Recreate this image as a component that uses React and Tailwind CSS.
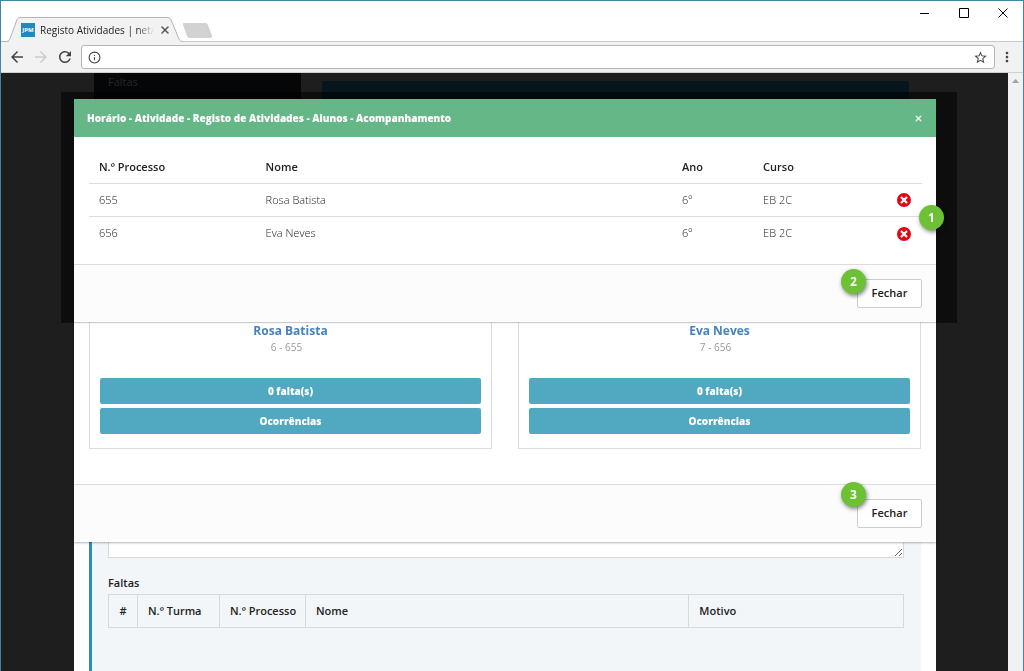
import { Info, X } from 'lucide-react';
import { MdArrowBack, MdArrowForward, MdMoreVert, MdRefresh, MdStarBorder } from 'react-icons/md';

const students = [
  { id: '655', number: '6', name: 'Rosa Batista', year: '6º', course: 'EB 2C' },
  { id: '656', number: '7', name: 'Eva Neves', year: '6º', course: 'EB 2C' },
];

function TabStrip() {
  return (
    <div className="flex h-10 items-end justify-between bg-white">
      <div className="flex items-end">
        <div className="relative h-6 w-[182px] pl-px">
          <svg className="absolute top-0 left-0 z-10 h-[26px] w-[182px]" viewBox="0 0 184 26" preserveAspectRatio="none" aria-hidden="true">
            <path d="M8 26V24C8.500 23.500 8.700 23 9 22L16 3C17 1 18 .5 20 .5H168C170 .5 171 1 172 3L180 22C181 24 182 25 184 25V26Z" fill="#f2f2f2" />
            <path d="M0 24.5H4C7 24.5 8 24 9 22L16 3C17 1 18 .5 20 .5H168C170 .5 171 1 172 3L180 22C181 24 182 24.5 184 24.5" fill="none" stroke="#b3b3b3" />
          </svg>
          <div className="relative z-20 flex h-[26px] items-center pl-[19px]">
            <span className="flex size-[14px] shrink-0 items-center justify-center bg-[#2089c0] text-[6px] font-bold text-white">
              JPM
            </span>
            <span className="ml-[5px] w-[114px] mask-r-from-85% text-[10px] whitespace-nowrap text-[#222]">
              Registo Atividades | netA
            </span>
            <button type="button" aria-label="Fechar separador" className="ml-[5px] text-[#555]">
              <X size={12} strokeWidth={3} />
            </button>
          </div>
        </div>
        <button type="button" aria-label="Novo separador" className="mb-[3px]">
          <svg className="h-[15px] w-[30px]" viewBox="0 0 30 15" aria-hidden="true">
            <path d="M1 .5H22C23.500 .5 24 1 24.500 2L28.500 12.500C29 14 28.500 14.500 27 14.500H7C5.500 14.500 5 14 4.500 13L.5 2C0 1 0 .5 1 .5Z" fill="#d2d2d2" stroke="#c4c4c4" strokeWidth=".6" />
          </svg>
        </button>
      </div>
      <div className="flex h-full items-start gap-[29px] pt-[7px] pr-[15px] text-black">
        <button type="button" aria-label="Minimizar">
          <svg className="size-[10px]" viewBox="0 0 10 10" stroke="currentColor"><path d="M0 5.500H9" /></svg>
        </button>
        <button type="button" aria-label="Maximizar">
          <svg className="size-[10px]" viewBox="0 0 10 10" stroke="currentColor" fill="none"><path d="M.5 .5H9.500V9.500H.5Z" /></svg>
        </button>
        <button type="button" aria-label="Fechar janela">
          <svg className="size-[10px]" viewBox="0 0 10 10" stroke="currentColor"><path d="M.5 .5L9.500 9.500M9.500 .5L.5 9.500" /></svg>
        </button>
      </div>
    </div>
  );
}

function Toolbar() {
  return (
    <div className="flex h-8 items-center border-t border-b border-t-[#c9c9c9] border-b-[#d0d0d0] bg-[#f2f2f2] pr-2 pl-[7px] text-[#444]">
      <button type="button" aria-label="Retroceder" className="mr-[6px]">
        <MdArrowBack size={18} />
      </button>
      <button type="button" aria-label="Avançar" className="mr-[6px] text-[#ccc]">
        <MdArrowForward size={18} />
      </button>
      <button type="button" aria-label="Recarregar" className="mr-[7px]">
        <MdRefresh size={18} />
      </button>
      <div className="flex h-6 flex-1 items-center rounded-[3px] border border-[#b5b5b5] bg-white px-[6px]">
        <Info size={13} strokeWidth={2} />
        <input type="text" aria-label="Endereço" className="h-5 flex-1 px-2 text-xs outline-none" />
        <button type="button" aria-label="Adicionar aos favoritos">
          <MdStarBorder size={15} />
        </button>
      </div>
      <button type="button" aria-label="Menu" className="ml-1">
        <MdMoreVert size={16} />
      </button>
    </div>
  );
}

function Marker({ value, className }) {
  return (
    <span
      className={`absolute z-20 flex size-[25px] items-center justify-center rounded-full bg-[#6cc234] text-xs font-bold text-white shadow-[1px_2px_4px_rgba(0,0,0,0.5)] ${className}`}
    >
      {value}
    </span>
  );
}

function ModalFooter({ marker, markerClass }) {
  return (
    <footer className="flex justify-end border-t border-[#dcdcdc] bg-[#fcfcfc] px-[14px] py-[14px]">
      <div className="relative">
        <button type="button" className="h-[29px] w-[65px] rounded-xs border border-[#ccc] bg-white text-[11px] font-semibold text-[#222]">
          Fechar
        </button>
        <Marker value={marker} className={markerClass} />
      </div>
    </footer>
  );
}

function RemoveIcon() {
  return (
    <svg className="size-[14px]" viewBox="0 0 14 14" aria-hidden="true">
      <circle cx="7" cy="7" r="7" fill="#e30613" />
      <path d="M4 4L10 10M10 4L4 10" stroke="white" strokeWidth="2.200" />
    </svg>
  );
}

function FollowUpModal() {
  return (
    <section role="dialog" aria-labelledby="follow-up-title" className="relative">
      <div className="absolute -top-[7px] -right-[21px] -bottom-px -left-[13px] bg-black/55" />
      <div className="relative z-10 bg-white shadow-[0_1px_1px_rgba(0,0,0,0.2)]">
        <header className="flex h-[38px] items-center justify-between bg-[#66b788] px-[13px] text-white">
          <h2 id="follow-up-title" className="text-[10px] font-extrabold">
            Horário - Atividade - Registo de Atividades - Alunos - Acompanhamento
          </h2>
          <button type="button" aria-label="Fechar" className="text-white/80">
            <X size={9} strokeWidth={4} />
          </button>
        </header>
        <div className="py-[14px] pr-[14px] pl-[15px]">
          <table className="w-full table-fixed border-separate border-spacing-0 text-left text-[11px]">
            <thead className="text-[#222]">
              <tr className="h-[33px]">
                <th className="w-[20%] border-b border-[#ddd] px-[10px] font-semibold">N.º Processo</th>
                <th className="w-[50%] border-b border-[#ddd] px-[10px] font-semibold">Nome</th>
                <th className="w-[81px] border-b border-[#ddd] px-[10px] font-semibold">Ano</th>
                <th className="border-b border-[#ddd] px-[10px] font-semibold">Curso</th>
                <th className="w-[35px] border-b border-[#ddd]" aria-label="Remover" />
              </tr>
            </thead>
            <tbody className="font-light text-[#222] [&>tr:not(:last-child)>td]:border-b">
              {students.map((student) => (
                <tr key={student.id} className="h-[33px]">
                  <td className="border-[#ddd] px-[10px]">{student.id}</td>
                  <td className="border-[#ddd] px-[10px]">{student.name}</td>
                  <td className="border-[#ddd] px-[10px]">{student.year}</td>
                  <td className="border-[#ddd] px-[10px]">{student.course}</td>
                  <td className="border-[#ddd] px-[10px]">
                    <button type="button" aria-label={`Remover ${student.name}`} className="block">
                      <RemoveIcon />
                    </button>
                  </td>
                </tr>
              ))}
            </tbody>
          </table>
        </div>
        <ModalFooter marker="2" markerClass="-top-[10px] -left-4" />
        <Marker value="1" className="top-[106px] -right-2" />
      </div>
    </section>
  );
}

function StudentCard({ student }) {
  return (
    <article className="flex-1 border border-t-0 border-[#ddd] px-[10px] pb-[14px] text-center">
      <h3 className="pt-px text-[12px] leading-4 font-bold text-[#4682bd]">{student.name}</h3>
      <p className="pr-2 text-[10px] leading-[17px] text-[#999]">
        {student.number} - {student.id}
      </p>
      <div className="mt-[22px] flex flex-col gap-1 text-[10px] font-extrabold text-white">
        <button type="button" className="h-[26px] rounded-xs bg-[#50a9c1]">
          0 falta(s)
        </button>
        <button type="button" className="h-[26px] rounded-xs bg-[#50a9c1]">
          Ocorrências
        </button>
      </div>
    </article>
  );
}

function StudentsModal() {
  return (
    <section role="dialog" aria-label="Alunos" className="relative bg-white shadow-[0_1px_2px_rgba(0,0,0,0.3)]">
      <div className="flex gap-[26px] px-[15px] pb-[35px]">
        {students.map((student) => (
          <StudentCard key={student.id} student={student} />
        ))}
      </div>
      <ModalFooter marker="3" markerClass="-top-[17px] -left-4" />
    </section>
  );
}

function AbsencesForm() {
  return (
    <section className="flex flex-1 flex-col bg-white px-[15px]">
      <div className="flex-1 border-l-3 border-[#2b8fb3] bg-[#f2f6f9] pr-[17px] pl-4">
        <textarea
          aria-label="Observações"
          className="block h-4 w-full resize border border-t-0 border-[#d5dadd] bg-white outline-none"
        />
        <h3 className="mt-4 mb-[3px] text-[11px] leading-[17px] font-semibold text-[#222]">Faltas</h3>
        <table className="w-full table-fixed border-collapse text-left text-[11px] text-[#222]">
          <thead>
            <tr className="h-[33px]">
              <th className="w-[29px] border border-[#d5dadd] text-center font-semibold">#</th>
              <th className="w-[82px] border border-[#d5dadd] px-[10px] font-semibold">N.º Turma</th>
              <th className="w-[86px] border border-[#d5dadd] px-[10px] font-semibold whitespace-nowrap">N.º Processo</th>
              <th className="border border-[#d5dadd] px-[10px] font-semibold">Nome</th>
              <th className="w-[27%] border border-[#d5dadd] px-[10px] font-semibold">Motivo</th>
            </tr>
          </thead>
        </table>
      </div>
    </section>
  );
}

export default function App() {
  return (
    <div className="flex h-screen flex-col overflow-hidden border border-b-0 border-[#3d87a6] font-['Open_Sans',sans-serif]">
      <TabStrip />
      <Toolbar />
      <div className="flex min-h-0 flex-1">
        <main className="flex flex-1 flex-col overflow-hidden bg-[#1e1e1e] pl-px">
          <div className="flex h-[26px] shrink-0 pr-[99px] pl-[92px]">
            <div className="h-full w-[207px] bg-[#050608] pl-[14px] text-[11px] leading-[18px] text-[#25282b]">Faltas</div>
            <div className="mt-2 ml-[21px] flex-1 rounded-t-xs bg-[#07151c]" />
          </div>
          <div className="mx-[72px] flex flex-1 flex-col">
            <FollowUpModal />
            <StudentsModal />
            <AbsencesForm />
          </div>
        </main>
        <div className="flex w-[15px] justify-center bg-[#f1f1f1] pt-[6px]">
          <svg className="h-[4px] w-[7px]" viewBox="0 0 7 4" aria-hidden="true">
            <path d="M0 4L3.500 0L7 4Z" fill="#a3a3a3" />
          </svg>
        </div>
      </div>
    </div>
  );
}
